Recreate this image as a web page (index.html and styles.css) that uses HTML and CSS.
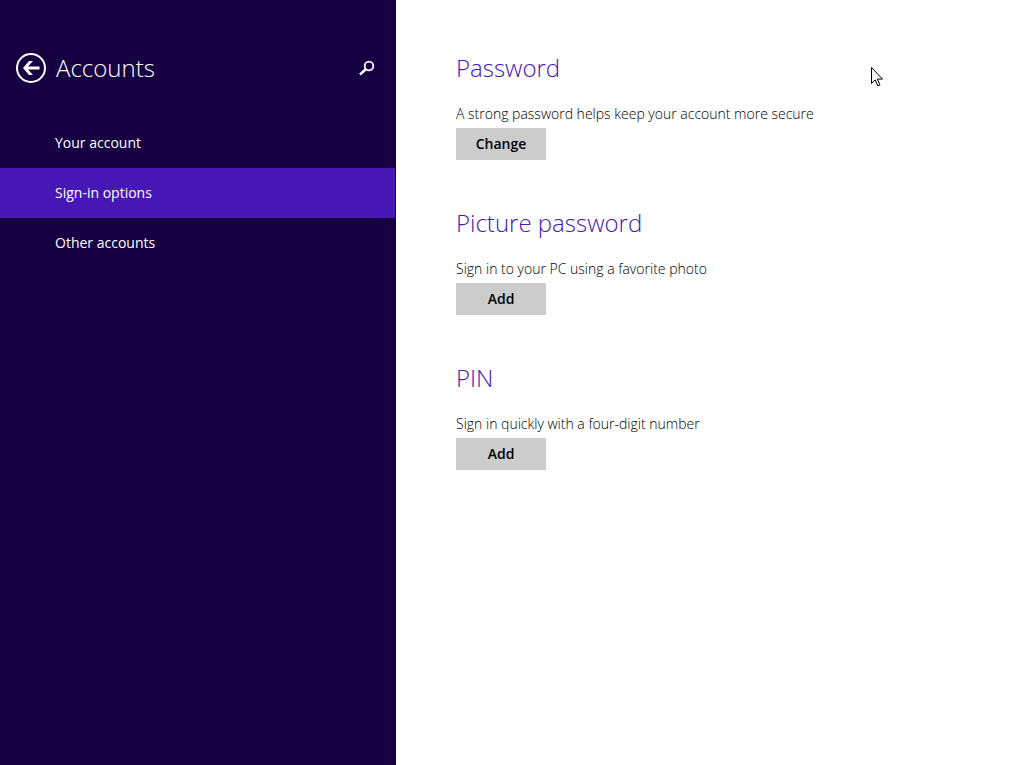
FILE: index.html
```
<!DOCTYPE html>
<html lang="en">
<head>
<meta charset="utf-8">
<title>Accounts</title>
<link rel="stylesheet" href="styles.css">
</head>
<body>
<aside class="sidebar">
  <header class="sidebar-header">
    <button class="icon-button" type="button" aria-label="Back">
      <svg width="30" height="30" viewBox="0 0 30 30"><circle cx="15" cy="15" r="14" fill="none" stroke="#fff" stroke-width="2"/><path d="M7 15l6-7h4l-5 5.500h11.500v3H12l5 5.500h-4z" fill="#fff"/></svg>
    </button>
    <h1 class="title">Accounts</h1>
    <button class="icon-button search" type="button" aria-label="Search">
      <svg width="16" height="16" viewBox="0 0 16 16" fill="none" stroke="#fff"><circle cx="10" cy="6" r="4.300" stroke-width="1.800"/><path d="M7 9L1 14.500" stroke-width="2.500"/></svg>
    </button>
  </header>
  <nav class="nav">
    <a class="nav-item" href="#account">Your account</a>
    <a class="nav-item selected" href="#signin" aria-current="page">Sign-in options</a>
    <a class="nav-item" href="#other">Other accounts</a>
  </nav>
</aside>
<main class="content">
  <section class="option">
    <h2 class="heading">Password</h2>
    <p class="description">A strong password helps keep your account more secure</p>
    <button class="action" type="button">Change</button>
  </section>
  <section class="option">
    <h2 class="heading">Picture password</h2>
    <p class="description">Sign in to your PC using a favorite photo</p>
    <button class="action" type="button">Add</button>
  </section>
  <section class="option">
    <h2 class="heading">PIN</h2>
    <p class="description">Sign in quickly with a four-digit number</p>
    <button class="action" type="button">Add</button>
  </section>
</main>
<svg class="pointer" width="12" height="20" viewBox="0 0 12 20"><path d="M.5.500v16l3.700-3.600 2.600 6 2.200-1-2.600-5.800h5.100z" fill="#fff" stroke="#000"/></svg>
</body>
</html>
```
FILE: styles.css
```
* { box-sizing: border-box; }
body {
  display: flex;
  min-height: 100vh;
  margin: 0;
  background: #fff;
  color: #000;
  font: 14px/20px "Open Sans", "Noto Sans", sans-serif;
}
.sidebar {
  flex: 0 0 396px;
  padding-top: 48px;
  border-right: 1px solid #160042;
  background: #160042;
  color: #fff;
}
.sidebar-header {
  display: flex;
  align-items: center;
  height: 40px;
  padding: 0 20px 0 16px;
}
.icon-button {
  display: flex;
  padding: 0;
  border: 0;
  background: none;
}
.search { margin-left: auto; }
.title, .heading {
  margin: 0;
  font-size: 24px;
  line-height: 40px;
  font-weight: 300;
}
.title { margin-left: 10px; }
.nav { padding-top: 30px; }
.nav-item {
  display: block;
  padding-left: 55px;
  color: #fff;
  line-height: 50px;
  text-decoration: none;
}
.selected { background: #4617b4; }
.content {
  flex: 1;
  padding: 48px 60px;
}
.option { margin-bottom: 43px; }
.heading { color: #4617b4; }
.description {
  margin: 16px 0 4px;
  font-weight: 300;
}
.action {
  display: block;
  width: 90px;
  height: 32px;
  padding: 0;
  border: 0;
  background: #ccc;
  color: #000;
  font: inherit;
  font-weight: 600;
}
.pointer {
  position: absolute;
  top: 67px;
  left: 871px;
}
```
